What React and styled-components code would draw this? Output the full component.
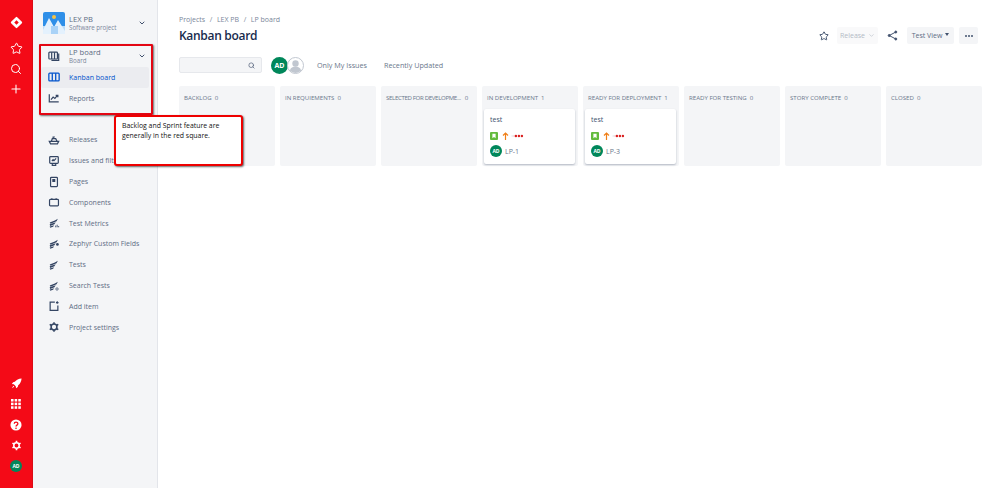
import React from 'react';
import styled, { createGlobalStyle } from 'styled-components';
import { Star, Search, Plus, ChevronDown } from 'lucide-react';

const GlobalStyle = createGlobalStyle`
  html, body {
    margin: 0;
    padding: 0;
    background: #fff;
    font-family: "Open Sans", "Noto Sans", "Liberation Sans", sans-serif;
    color: #42526e;
  }
  * { box-sizing: border-box; }
`;

const Page = styled.div`
  position: relative;
  display: flex;
  width: 999px;
  height: 488px;
  overflow: hidden;
`;

const GlobalNav = styled.nav`
  width: 33px;
  flex-shrink: 0;
  background: #f40a17;
  border-right: 1px solid #dc0b16;
  color: #fff;
  display: flex;
  flex-direction: column;
  align-items: center;
  justify-content: space-between;
  padding: 14px 0 14px;
`;

const NavGroup = styled.div`
  display: flex;
  flex-direction: column;
  align-items: center;
  gap: ${p => p.$gap}px;
`;

const NavSlot = styled.div`
  width: 16px;
  height: 16px;
  margin-bottom: ${p => p.$after || 0}px;
  display: flex;
  align-items: center;
  justify-content: center;
`;

const Avatar = styled.div`
  width: ${p => p.$size}px;
  height: ${p => p.$size}px;
  border-radius: 50%;
  background: #00875a;
  color: #fff;
  font-size: ${p => p.$font}px;
  font-weight: 700;
  display: flex;
  align-items: center;
  justify-content: center;
  flex-shrink: 0;
`;

const Sidebar = styled.aside`
  width: 125px;
  flex-shrink: 0;
  background: #f4f5f7;
  border-right: 1px solid #e3e5ea;
  padding: 12px 0 0 8px;
`;

const ProjectHeader = styled.div`
  display: flex;
  align-items: center;
  height: 22px;
  padding-left: 2px;
  margin-bottom: 11px;
`;

const ProjectLogo = styled.div`
  width: 22px;
  height: 22px;
  margin-right: 4px;
  flex-shrink: 0;
`;

const TitleStack = styled.div`
  flex: 1;
  display: flex;
  flex-direction: column;
`;

const ProjectName = styled.span`
  font-size: 7.6px;
  line-height: 10px;
  color: #5e6c84;
`;

const ProjectSub = styled.span`
  font-size: 6.2px;
  line-height: 8px;
  color: #7a869a;
`;

const BoardHeader = styled.div`
  display: flex;
  align-items: center;
  height: 22px;
  padding-left: 6px;
`;

const NavList = styled.div`
  display: flex;
  flex-direction: column;
  margin-top: ${p => p.$top || 0}px;
`;

const NavRow = styled.div`
  display: flex;
  align-items: center;
  height: 20.8px;
  margin-right: 8px;
  padding-left: 6px;
  font-size: 7px;
  white-space: nowrap;
  border-radius: 2px;
  color: ${p => (p.$active ? '#0052cc' : '#5e6c84')};
  background: ${p => (p.$active ? '#ebecf0' : 'transparent')};
`;

const RowIcon = styled.span`
  width: 14px;
  height: 14px;
  margin-right: 8px;
  display: flex;
  align-items: center;
  justify-content: center;
  flex-shrink: 0;
`;

const Main = styled.main`
  flex: 1;
  min-width: 0;
  padding: 15px 16px 0 21px;
`;

const Breadcrumbs = styled.div`
  font-size: 7px;
  line-height: 10px;
  color: #7a869a;
  display: flex;
  gap: 4.6px;
`;

const TitleRow = styled.div`
  display: flex;
  align-items: center;
  justify-content: space-between;
  height: 21px;
`;

const Title = styled.h1`
  margin: 0;
  font-size: 12px;
  font-weight: 600;
  letter-spacing: -0.3px;
  color: #172b4d;
`;

const Actions = styled.div`
  display: flex;
  align-items: center;
  margin-right: 5px;
`;

const ActionBtn = styled.div`
  height: 17px;
  width: ${p => p.$width}px;
  margin-left: ${p => p.$left || 0}px;
  border-radius: 2px;
  display: flex;
  align-items: center;
  justify-content: center;
  gap: 3px;
  font-size: 7px;
  background: ${p => (p.$disabled ? '#f9f9fa' : '#f4f5f7')};
  color: ${p => (p.$disabled ? '#b3bac5' : '#5e6c84')};
`;

const Caret = styled.span`
  width: 0;
  height: 0;
  border-left: 2.5px solid transparent;
  border-right: 2.5px solid transparent;
  border-top: 3px solid #42526e;
  margin-top: -2px;
`;

const Filters = styled.div`
  display: flex;
  align-items: center;
  height: 18px;
  margin-top: 10px;
`;

const SearchBox = styled.div`
  width: 83px;
  height: 16px;
  background: #f4f5f7;
  border: 1px solid #e6e8ec;
  border-radius: 2px;
  display: flex;
  align-items: center;
  justify-content: flex-end;
  padding-right: 6px;
  margin-right: 9px;
`;

const GhostAvatar = styled.div`
  width: 17px;
  height: 17px;
  margin-left: -1px;
  flex-shrink: 0;
`;

const QuickFilter = styled.span`
  font-size: 7.2px;
  margin-left: ${p => p.$left}px;
  color: #6b778c;
`;

const Board = styled.div`
  display: grid;
  grid-template-columns: repeat(8, 96px);
  column-gap: 5px;
  margin-top: 12px;
`;

const Column = styled.section`
  height: 80px;
  background: #f4f5f7;
  border-radius: 2px;
  padding: 0 3px 0 2px;
`;

const ColumnHead = styled.div`
  height: 23px;
  padding: 0 3px 1px;
  display: flex;
  align-items: center;
  font-size: 6.1px;
  color: #6b778c;
  white-space: nowrap;
`;

const ColumnName = styled.span`
  letter-spacing: ${p => (p.$tight ? '-0.34px' : '0')};
`;

const Count = styled.span`
  margin-left: ${p => (p.$tight ? 4 : 3)}px;
`;

const Card = styled.article`
  height: 55px;
  background: #fff;
  border-radius: 2px;
  box-shadow: 0 1px 2px rgba(9, 30, 66, 0.28);
  padding: 6px 6px 0;
`;

const CardTitle = styled.div`
  font-size: 7px;
  line-height: 10px;
  color: #42526e;
`;

const CardIcons = styled.div`
  display: flex;
  align-items: center;
  gap: 4px;
  height: 8px;
  margin-top: 7px;
`;

const PriorityDots = styled.svg`
  margin-left: -2px;
`;

const CardFoot = styled.div`
  display: flex;
  align-items: center;
  gap: 3px;
  margin-top: 5px;
  font-size: 7px;
  color: #6b778c;
`;

const RedFrame = styled.div`
  position: absolute;
  left: 39px;
  top: 44px;
  width: 114px;
  height: 71px;
  border: 2px solid #e30613;
  border-radius: 1px;
  box-shadow: 1px 1px 2px rgba(0, 0, 0, 0.55);
`;

const Callout = styled.div`
  position: absolute;
  left: 114px;
  top: 115px;
  width: 129px;
  height: 51px;
  padding: 4px 6px;
  background: #fff;
  border: 2px solid #ee0000;
  border-radius: 3px;
  box-shadow: 1px 1px 2px rgba(0, 0, 0, 0.6);
  color: #111;
  font-size: 6.9px;
  line-height: 10px;
`;

const Svg = ({ children, size = 12, view = 14 }) => (
  <svg width={size} height={size} viewBox={`0 0 ${view} ${view}`} fill="none" stroke="#344563" strokeWidth="1.4">
    {children}
  </svg>
);

const Wing = ({ extra }) => (
  <Svg>
    <path d="M2 6.5 L8 4 L11.5 2 L10 5 L3 8Z" fill="#344563" stroke="none" />
    <path d="M2 8.5 L9 6 L7.5 8.5 L2.5 10.5Z" fill="#344563" stroke="none" />
    <path d="M2 11 L7 9.5 L6 11.5 L2.5 12.5Z" fill="#344563" stroke="none" />
    {extra}
  </Svg>
);

const icons = {
  board: (
    <Svg>
      <rect x="1" y="2.5" width="10" height="8" rx="1" />
      <path d="M4.3 2.5v8M7.6 2.5v8M12.5 4v8H4" />
    </Svg>
  ),
  kanban: (
    <svg width="12" height="12" viewBox="0 0 14 14" fill="none" stroke="#0052cc" strokeWidth="1.5">
      <rect x="1" y="2.5" width="12" height="9" rx="1" />
      <path d="M5 2.5v9M9 2.5v9" />
    </svg>
  ),
  reports: (
    <Svg>
      <path d="M1.5 2.5V11.5H12.5" />
      <path d="M3.5 9 L6 6 L8 7.5 L11 4" />
      <path d="M9 4h2.5v2.2" fill="#344563" />
    </Svg>
  ),
  releases: (
    <Svg>
      <path d="M1.5 8.5H12.5L11 11.5H3Z" />
      <path d="M4 8.5 L5 5.5 H9 L10.5 8.5" />
      <path d="M6 5.5V3.5H8" />
    </Svg>
  ),
  issues: (
    <Svg>
      <rect x="2" y="1.8" width="10" height="8" rx="1" />
      <path d="M4.5 7 L6 5.5 L7 6.5 L9.5 4" />
      <path d="M5 10v2h4v-2" />
    </Svg>
  ),
  pages: (
    <Svg>
      <rect x="3" y="1.5" width="8" height="11" rx="1" />
      <rect x="5" y="3.5" width="3.5" height="3.5" fill="#344563" stroke="none" />
    </Svg>
  ),
  components: (
    <Svg>
      <rect x="1.8" y="4" width="10.4" height="7.5" rx="1" />
      <path d="M4.5 4V2.5M9.5 4V2.5" />
    </Svg>
  ),
  metrics: <Wing extra={<path d="M9 12V10M10.7 12V9M12.4 12V10.5" strokeWidth="1" />} />,
  zephyr: <Wing extra={<circle cx="11" cy="7.5" r="1.6" fill="#344563" stroke="none" />} />,
  tests: <Wing />,
  searchTests: <Wing extra={<circle cx="10.5" cy="10.5" r="1.4" strokeWidth="0.8" />} />,
  add: (
    <Svg>
      <path d="M8 2.5H2.5V12H11.5V6.5" />
      <path d="M10.8 1.5v3M9.3 3h3" />
    </Svg>
  ),
  settings: (
    <Svg>
      <circle cx="7" cy="7" r="3.4" strokeWidth="1.8" />
      <path d="M7 1.5v2M7 10.5v2M2 4l1.8 1M10.2 9l1.8 1M2 10l1.8-1M10.2 5l1.8-1" strokeWidth="1.8" />
    </Svg>
  ),
};

const mainNav = [
  ['Releases', 'releases'],
  ['Issues and filters', 'issues'],
  ['Pages', 'pages'],
  ['Components', 'components'],
  ['Test Metrics', 'metrics'],
  ['Zephyr Custom Fields', 'zephyr'],
  ['Tests', 'tests'],
  ['Search Tests', 'searchTests'],
  ['Add item', 'add'],
  ['Project settings', 'settings'],
];

const columns = [
  { name: 'BACKLOG', count: 0 },
  { name: 'IN REQUIEMENTS', count: 0 },
  { name: 'SELECTED FOR DEVELOPME...', count: 0, tight: true },
  { name: 'IN DEVELOPMENT', count: 1, issue: 'LP-1' },
  { name: 'READY FOR DEPLOYMENT', count: 1, issue: 'LP-3' },
  { name: 'READY FOR TESTING', count: 0 },
  { name: 'STORY COMPLETE', count: 0 },
  { name: 'CLOSED', count: 0 },
];

const Logo = () => (
  <svg width="13" height="13" viewBox="0 0 13 13">
    <rect x="2.2" y="2.2" width="8.6" height="8.6" rx="1" transform="rotate(45 6.5 6.5)" fill="#fff" />
    <rect x="4.9" y="4.9" width="3.2" height="3.2" transform="rotate(45 6.5 6.5)" fill="#f40a17" />
  </svg>
);

const ProjectArt = () => (
  <svg width="22" height="22" viewBox="0 0 22 22">
    <rect width="22" height="22" rx="2" fill="#2f8fe8" />
    <rect y="14" width="22" height="8" fill="#b9dcfa" />
    <path d="M0 18 L6 6 L11 15 L15 8 L22 19 V22 H0Z" fill="#e4f1fd" />
    <rect x="8" y="14" width="7" height="8" fill="#a9d2f7" />
    <circle cx="11" cy="5" r="2" fill="#f6c244" />
  </svg>
);

const Ghost = () => (
  <svg width="17" height="17" viewBox="0 0 17 17">
    <circle cx="8.5" cy="8.5" r="8" fill="#fff" stroke="#c1c7d0" />
    <circle cx="8.5" cy="6.5" r="3.2" fill="#c1c7d0" />
    <path d="M2.8 13.5c1-3 3-4 5.7-4s4.7 1 5.7 4a8 8 0 0 1-11.4 0Z" fill="#c1c7d0" />
  </svg>
);

const ShareIcon = () => (
  <svg width="11" height="11" viewBox="0 0 11 11" fill="#42526e" stroke="#42526e" strokeWidth="1" style={{ marginLeft: 9 }}>
    <path d="M8.8 2 2.2 5.5 8.8 9" fill="none" />
    <circle cx="8.8" cy="2" r="1" />
    <circle cx="2.2" cy="5.5" r="1" />
    <circle cx="8.8" cy="9" r="1" />
  </svg>
);

const CardMeta = () => (
  <>
    <svg width="8" height="8" viewBox="0 0 8 8">
      <rect width="8" height="8" rx="1" fill="#63ba3c" />
      <path d="M2.4 1.8h3.2v4.4L4 5 2.4 6.2Z" fill="#fff" />
    </svg>
    <svg width="7" height="8" viewBox="0 0 7 8" fill="none" stroke="#f07f18" strokeWidth="1.2">
      <path d="M3.5 8V1M1 3.5 3.5 1 6 3.5" />
    </svg>
    <PriorityDots width="13" height="4" viewBox="0 0 13 4">
      <circle cx="1.2" cy="2" r="0.8" fill="#dfe1e6" />
      <rect x="2" y="1.6" width="2" height="0.8" fill="#f3b0b0" />
      <circle cx="4.9" cy="2" r="1.2" fill="#d92020" />
      <circle cx="7.9" cy="2" r="1.2" fill="#d92020" />
      <circle cx="10.9" cy="2" r="1.2" fill="#d92020" />
    </PriorityDots>
  </>
);

export default function App() {
  return (
    <>
      <GlobalStyle />
      <Page>
        <GlobalNav>
          <NavGroup $gap={4.6}>
            <NavSlot $after={5.6}><Logo /></NavSlot>
            <NavSlot><Star size={13} strokeWidth={1.8} /></NavSlot>
            <NavSlot><Search size={12} strokeWidth={2} /></NavSlot>
            <NavSlot><Plus size={14} strokeWidth={1.8} /></NavSlot>
          </NavGroup>
          <NavGroup $gap={4.75}>
            <NavSlot>
              <svg width="11" height="11" viewBox="0 0 13 13" fill="#fff">
                <path d="M12.5.5C9 .8 6.5 2 4.5 4.5L2.5 5 1 7l2.3.4 2.3 2.3L6 12l2-1.5.5-2C11 6.5 12.2 4 12.5.5ZM2.8 9.2 1 12l2.8-1.8Z" />
              </svg>
            </NavSlot>
            <NavSlot>
              <svg width="10" height="10" viewBox="0 0 11 11" fill="#fff">
                {[0, 4, 8].flatMap(y => [0, 4, 8].map(x => <rect key={`${x}-${y}`} x={x} y={y} width="2.8" height="2.8" />))}
              </svg>
            </NavSlot>
            <NavSlot>
              <svg width="12" height="12" viewBox="0 0 13 13">
                <circle cx="6.5" cy="6.5" r="6" fill="#fff" />
                <path d="M4.6 5.2c0-2.4 3.9-2.4 3.9 0 0 1.5-2 1.4-2 3" fill="none" stroke="#f40a17" strokeWidth="1.4" />
                <circle cx="6.5" cy="10" r=".9" fill="#f40a17" />
              </svg>
            </NavSlot>
            <NavSlot>
              <svg width="11" height="11" viewBox="0 0 13 13" fill="none" stroke="#fff">
                <circle cx="6.5" cy="6.5" r="3.2" strokeWidth="1.8" />
                <path d="M6.5 1v2M6.5 10v2M1.7 3.7l1.8 1M9.5 8.3l1.8 1M1.7 9.3l1.8-1M9.5 4.7l1.8-1" strokeWidth="2" />
              </svg>
            </NavSlot>
            <NavSlot>
              <Avatar $size={12} $font={5}>AD</Avatar>
            </NavSlot>
          </NavGroup>
        </GlobalNav>

        <Sidebar>
          <ProjectHeader>
            <ProjectLogo><ProjectArt /></ProjectLogo>
            <TitleStack>
              <ProjectName>LEX PB</ProjectName>
              <ProjectSub>Software project</ProjectSub>
            </TitleStack>
            <ChevronDown size={8} strokeWidth={3} color="#42526e" style={{ marginRight: 11 }} />
          </ProjectHeader>
          <BoardHeader>
            <RowIcon>{icons.board}</RowIcon>
            <TitleStack>
              <ProjectName>LP board</ProjectName>
              <ProjectSub>Board</ProjectSub>
            </TitleStack>
            <ChevronDown size={8} strokeWidth={3} color="#42526e" style={{ marginRight: 11 }} />
          </BoardHeader>
          <NavList>
            <NavRow $active><RowIcon>{icons.kanban}</RowIcon>Kanban board</NavRow>
            <NavRow><RowIcon>{icons.reports}</RowIcon>Reports</NavRow>
          </NavList>
          <NavList $top={21}>
            {mainNav.map(([label, icon]) => (
              <NavRow key={label}><RowIcon>{icons[icon]}</RowIcon>{label}</NavRow>
            ))}
          </NavList>
        </Sidebar>

        <Main>
          <Breadcrumbs>
            <span>Projects</span><span>/</span><span>LEX PB</span><span>/</span><span>LP board</span>
          </Breadcrumbs>
          <TitleRow>
            <Title>Kanban board</Title>
            <Actions>
              <Star size={10} strokeWidth={2} color="#253858" />
              <ActionBtn $disabled $left={8} $width={41}>
                Release
                <ChevronDown size={7} strokeWidth={2} color="#b3bac5" />
              </ActionBtn>
              <ShareIcon />
              <ActionBtn $left={9} $width={47}>Test View <Caret /></ActionBtn>
              <ActionBtn $left={5} $width={19}>
                <svg width="8" height="2" viewBox="0 0 8 2" fill="#42526e">
                  <circle cx="1" cy="1" r="1" /><circle cx="4" cy="1" r="1" /><circle cx="7" cy="1" r="1" />
                </svg>
              </ActionBtn>
            </Actions>
          </TitleRow>
          <Filters>
            <SearchBox><Search size={7} strokeWidth={2.4} color="#505f79" /></SearchBox>
            <Avatar $size={17} $font={7}>AD</Avatar>
            <GhostAvatar><Ghost /></GhostAvatar>
            <QuickFilter $left={13}>Only My Issues</QuickFilter>
            <QuickFilter $left={17}>Recently Updated</QuickFilter>
          </Filters>
          <Board>
            {columns.map(col => (
              <Column key={col.name}>
                <ColumnHead>
                  <ColumnName $tight={col.tight}>{col.name}</ColumnName>
                  <Count $tight={col.tight}>{col.count}</Count>
                </ColumnHead>
                {col.issue && (
                  <Card>
                    <CardTitle>test</CardTitle>
                    <CardIcons><CardMeta /></CardIcons>
                    <CardFoot>
                      <Avatar $size={12} $font={5}>AD</Avatar>
                      {col.issue}
                    </CardFoot>
                  </Card>
                )}
              </Column>
            ))}
          </Board>
        </Main>

        <RedFrame />
        <Callout>Backlog and Sprint feature are generally in the red square.</Callout>
      </Page>
    </>
  );
}
